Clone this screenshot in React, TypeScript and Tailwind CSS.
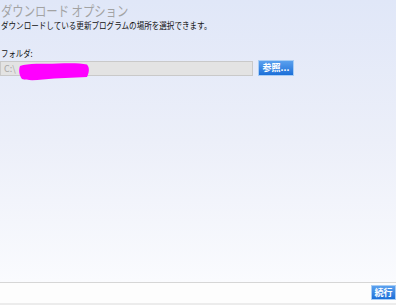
import React from "react";

const font = { fontFamily: '"Noto Sans CJK JP", "Noto Sans", sans-serif' };

export default function App() {
  return (
    <div className="w-[396px] h-[305px] flex flex-col overflow-hidden bg-white" style={font}>
      <div className="h-[282px] bg-gradient-to-b from-[#e0e7f8] via-[#eceff9] to-[#fafbfe] flex flex-col">
        <div className="pl-[1px] pt-[2px] h-[20px] flex">
          <div className="origin-left scale-x-[0.81] text-[14px] leading-[16px] text-[#a3a3a3] whitespace-nowrap">
            ダウンロード オプション
          </div>
        </div>
        <div className="pl-[1px] h-[12px] flex">
          <div className="origin-left scale-x-[0.84] text-[9px] leading-[12px] text-[#111] whitespace-nowrap">
            ダウンロードしている更新プログラムの場所を選択できます。
          </div>
        </div>
        <div className="pl-[1px] mt-[16px] h-[12px] flex">
          <div className="origin-left scale-x-[0.82] text-[9px] leading-[12px] text-[#111] whitespace-nowrap">
            フォルダ:
          </div>
        </div>
        <div className="mt-[1px] flex items-start">
          <div className="relative w-[253px] h-[15px] bg-[#e3e3e3] border border-[#c9c9c9] text-[9px] leading-[13px] text-[#a8a8a8] pl-[3px]">
            C:\
            <svg className="absolute left-[17px] top-[0px]" width="72" height="20" viewBox="0 0 72 20">
              <path
                d="M2 4 C10 1 25 2 40 1.5 C52 1 62 1 69 2.5 C72 6 71 11 69 15 C55 16 40 15.5 25 17.5 C16 18.5 9 18.5 4 17 C1 13 0.5 8 2 4 Z"
                fill="#ff00ff"
              />
            </svg>
          </div>
          <div className="ml-[5px] -mt-[1px] w-[36px] h-[16px] bg-gradient-to-b from-[#5aa0ee] to-[#1a6fd8] border border-[#a8cdf5] text-white text-[9px] leading-[14px] font-bold text-center">
            参照...
          </div>
        </div>
      </div>
      <div className="h-[1px] bg-[#d6d6d6]" />
      <div className="flex-1 bg-[#fdfdfd] flex justify-end items-start pt-[2px]">
        <div className="w-[25px] h-[15px] bg-gradient-to-b from-[#5aa0ee] to-[#1a6fd8] border border-[#a8cdf5] text-white text-[9px] leading-[13px] font-bold text-center">
          続行
        </div>
      </div>
      <div className="h-[2px] bg-[#ececec]" />
    </div>
  );
}
